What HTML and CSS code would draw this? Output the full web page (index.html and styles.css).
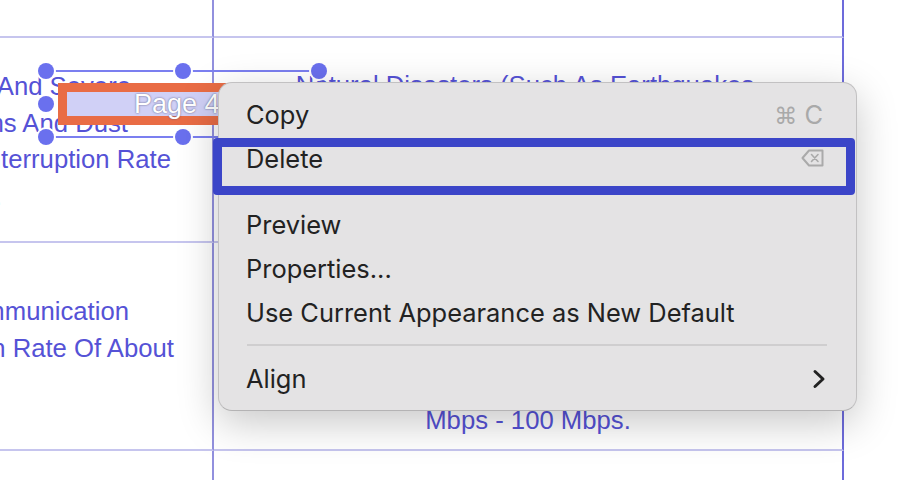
FILE: index.html
```
<!DOCTYPE html>
<html lang="en">
<head>
<meta charset="utf-8">
<title>Context menu</title>
<link rel="stylesheet" href="styles.css">
</head>
<body>
<div class="page">
  <div class="table">
    <div class="cell"></div>
    <div class="cell"></div>
    <div class="cell edge"></div>
    <div class="cell left top-cell">
      <div class="ln e1">And Severe</div>
      <div class="ln e2">ms And Dust</div>
      <div class="ln e3">Interruption Rate</div>
      <div class="ln e4">.</div>
    </div>
    <div class="cell mid top-cell"><div class="ln shift">Natural Disasters (Such As Earthquakes</div></div>
    <div class="cell edge"></div>
    <div class="cell left mid-cell">
      <div class="ln e5">Communication</div>
      <div class="ln e6">Interruption Rate Of About</div>
    </div>
    <div class="cell mid low-cell"><div class="ln">Mbps - 100 Mbps.</div></div>
    <div class="cell edge"></div>
    <div class="cell"></div>
    <div class="cell"></div>
    <div class="cell edge"></div>
  </div>

  <div class="selection">
    <div class="page-label"><span>Page 4</span></div>
    <i class="handle h-tl"></i><i class="handle h-tc"></i><i class="handle h-tr"></i>
    <i class="handle h-ml"></i><i class="handle h-bl"></i><i class="handle h-bc"></i>
  </div>

  <div class="menu">
    <div class="item"><span>Copy</span><span class="hint"><span class="cmd">⌘</span> C</span></div>
    <div class="item"><span>Delete</span>
      <svg class="del-icon" width="24" height="20" viewBox="0 0 24 20" fill="none" stroke="#aaaaaa" stroke-width="2" stroke-linejoin="round" stroke-linecap="round"><path d="M8 2.500H21.500V17.500H8L1.500 10Z"/><path d="M10.500 6.500L17 13.500M17 6.500L10.500 13.500" stroke-width="1.600"/></svg>
    </div>
    <div class="sep"></div>
    <div class="item"><span>Preview</span></div>
    <div class="item"><span>Properties...</span></div>
    <div class="item"><span>Use Current Appearance as New Default</span></div>
    <div class="sep"></div>
    <div class="item"><span>Align</span>
      <svg class="chev" width="14" height="20" viewBox="0 0 14 20" fill="none" stroke="#222222" stroke-width="3" stroke-linecap="round" stroke-linejoin="round"><path d="M3 2.500L11 10L3 17.500"/></svg>
    </div>
  </div>

  <div class="callout"></div>
</div>
</body>
</html>
```

FILE: styles.css
```
* { box-sizing: border-box; }
html, body { margin: 0; padding: 0; background: #fff; }
.page {
  position: relative;
  width: 918px;
  height: 480px;
  overflow: hidden;
  font-family: "Liberation Sans", Arial, sans-serif;
}
.table {
  display: grid;
  grid-template-columns: 214px 630px 74px;
  grid-template-rows: 38px 205px 208px 29px;
  color: #5552d6;
  font-size: 25.700px;
  line-height: 36.600px;
}
.cell {
  border-right: 2px solid #9290de;
  border-bottom: 2px solid #c6c5ee;
  min-width: 0;
}
.cell:nth-child(3n+2) { border-right-color: #6d6bdb; }
.edge { border-right: 0; border-bottom: 0; }
.cell:nth-last-child(-n+3) { border-bottom: 0; }
.left { display: flex; flex-direction: column; align-items: flex-end; white-space: nowrap; }
.mid { text-align: center; white-space: nowrap; }
.top-cell { padding-top: 30px; }
.mid-cell { padding-top: 50px; }
.low-cell { padding-top: 159px; }
.mid.top-cell { padding-top: 29px; }
.shift { padding-right: 6px; }
.e1 { margin-right: 81px; }
.e2 { margin-right: 84px; }
.e3 { margin-right: 41px; }
.e4 { margin-right: 210px; }
.e5 { margin-right: 83px; }
.e6 { margin-right: 38px; }

.selection {
  position: absolute;
  left: 46px;
  top: 70px;
  width: 273px;
  height: 68px;
  border-top: 2px solid #7b7ff0;
  border-bottom: 2px solid #7b7ff0;
}
.page-label {
  position: absolute;
  left: 12px;
  top: 11px;
  width: 180px;
  height: 42px;
  border: 9px solid #e96c45;
  background: #d0d0f6;
  color: #fff;
  font-size: 27px;
  line-height: 24px;
  padding-left: 67px;
  white-space: nowrap;
  text-shadow: 0 0 2px #55557a;
}
.handle {
  position: absolute;
  width: 16px;
  height: 16px;
  border-radius: 50%;
  background: #6a70ee;
  box-shadow: 0 0 0 2px #fff;
}
.h-tl { left: -8px; top: -9px; }
.h-tc { left: 129px; top: -9px; }
.h-tr { left: 265px; top: -9px; }
.h-ml { left: -8px; top: 24px; }
.h-bl { left: -8px; top: 57px; }
.h-bc { left: 129px; top: 57px; }

.menu {
  position: absolute;
  left: 218px;
  top: 82px;
  width: 639px;
  height: 329px;
  padding: 9px 29px 0 27px;
  background: #e4e3e4;
  border: 1px solid #c2c1c2;
  border-bottom-color: #b4b3b4;
  border-radius: 14px;
  box-shadow: 0 12px 40px rgba(0, 0, 0, 0.22);
  color: #222;
  font-family: Inter, "Noto Sans", sans-serif;
  font-size: 25.450px;
}
.item {
  display: flex;
  align-items: center;
  justify-content: space-between;
  height: 44px;
  padding-right: 4px;
  white-space: nowrap;
}
.hint { color: #a9a9a9; }
.cmd { font-family: "DejaVu Sans", sans-serif; font-size: 23px; }
.del-icon { margin-right: -2px; }
.chev { margin: 1px -3px 0 0; }
.sep {
  height: 2px;
  margin: 10px 0 10px 1px;
  background: #cfcecf;
}
.callout {
  position: absolute;
  left: 213px;
  top: 138px;
  width: 642px;
  height: 57px;
  border: 9px solid #3b45c8;
  border-radius: 4px;
}
```
